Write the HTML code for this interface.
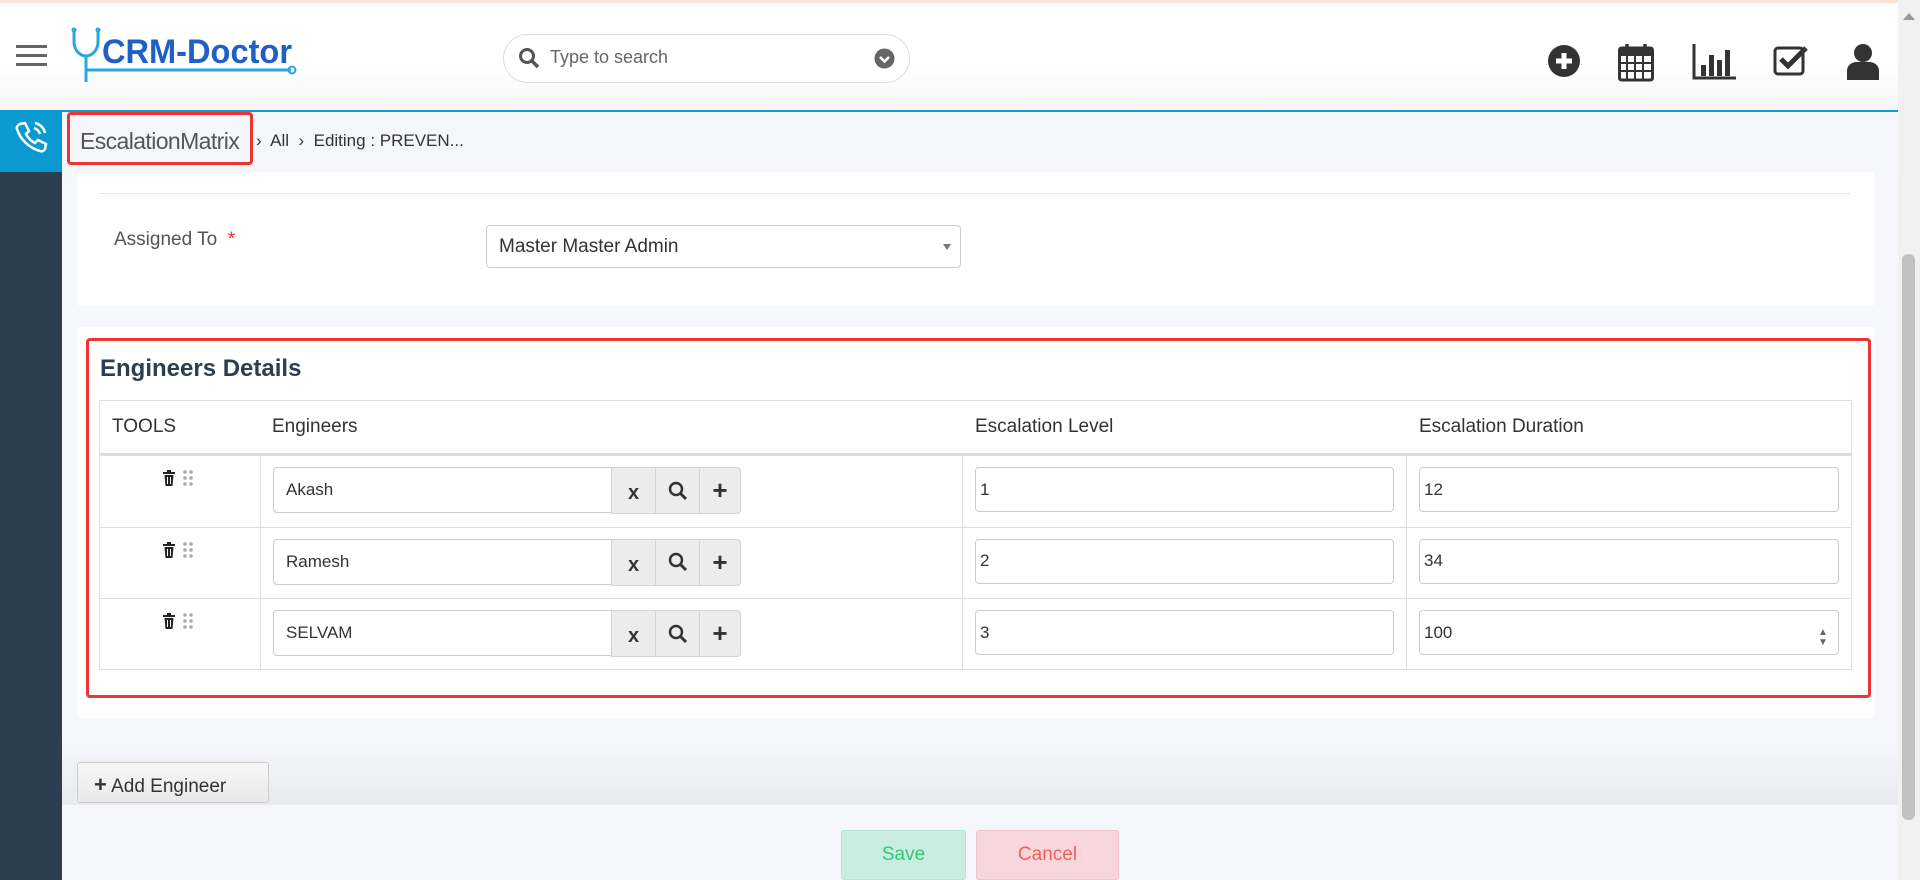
<!DOCTYPE html>
<html><head><meta charset="utf-8"><style>
*{box-sizing:border-box;margin:0;padding:0}
body{width:1920px;height:880px;overflow:hidden;font-family:"Liberation Sans",sans-serif;background:#f5f7fa;position:relative;color:#333}
.abs{position:absolute}
.top{left:0;top:0;width:1898px;height:110px;background:linear-gradient(#fff 60%,#f6f6f8);border-top:3px solid #fbe3dc}
.crumb{left:62px;top:110px;width:1836px;height:62px;background:#f4f6f9;border-top:2px solid #0aa0d0}
.side{left:0;top:110px;width:62px;height:770px;background:#2c3e50}
.phone{left:0;top:110px;width:62px;height:62px;background:#0a9ad0}
.card{background:#fff;border-radius:4px}
.inp{border:1px solid #ccc;border-radius:4px;background:#fff;font-size:17px;padding-left:12px;display:flex;align-items:center}
.th{font-size:19px;color:#333}
.btn{background:#ececec;border:1px solid #d4d4d4;display:flex;align-items:center;justify-content:center;font-size:20px;font-weight:bold;color:#333}
</style></head><body>
<div class="abs top"></div>
<div class="abs" style="left:16px;top:45px;width:31px;height:3px;background:#666;box-shadow:0 9px 0 #666,0 18px 0 #666"></div>
<svg class="abs" style="left:68px;top:26px" width="232" height="62" viewBox="0 0 232 62">
<path d="M6 4v12c0 8 6 14 12 14s12-6 12-14V4" fill="none" stroke="#2aa6e0" stroke-width="3"/>
<circle cx="6" cy="4" r="2.5" fill="#2aa6e0"/><circle cx="30" cy="4" r="2.5" fill="#2aa6e0"/>
<path d="M18 30v26M18 56V44h205" fill="none" stroke="#2aa6e0" stroke-width="3"/>
<circle cx="224" cy="44" r="3.5" fill="none" stroke="#2aa6e0" stroke-width="2"/>
<text x="34" y="37" font-family="Liberation Sans Narrow,Liberation Sans" font-weight="bold" font-size="34" fill="#1e5fc8" textLength="190" lengthAdjust="spacingAndGlyphs">CRM-Doctor</text>
</svg>
<div class="abs" style="left:503px;top:34px;width:407px;height:49px;border:1px solid #ddd;border-radius:25px;background:#fff"></div>
<svg class="abs" style="left:518px;top:47px" width="22" height="22" viewBox="0 0 22 22"><circle cx="9" cy="9" r="6.5" fill="none" stroke="#555" stroke-width="3"/><path d="M14 14l6 6" stroke="#555" stroke-width="3.5"/></svg>
<div class="abs" style="left:550px;top:47px;font-size:18px;color:#666">Type to search</div>
<svg class="abs" style="left:874px;top:48px" width="21" height="21"><circle cx="10.5" cy="10.5" r="10" fill="#666"/><path d="M6 9l4.5 4.5L15 9" fill="none" stroke="#fff" stroke-width="2.5"/></svg>
<svg class="abs" style="left:1547px;top:44px" width="34" height="34"><circle cx="17" cy="17" r="16" fill="#333"/><path d="M17 9v16M9 17h16" stroke="#fff" stroke-width="5"/></svg>
<svg class="abs" style="left:1618px;top:42px" width="36" height="40"><rect x="1.5" y="6" width="33" height="32" rx="2" fill="none" stroke="#333" stroke-width="3"/><rect x="1.5" y="6" width="33" height="8" fill="#333"/><path d="M9 2v8M27 2v8" stroke="#333" stroke-width="3.5"/><path d="M9 14v23M17 14v23M25 14v23M2 21h32M2 29h32" stroke="#333" stroke-width="2"/></svg>
<svg class="abs" style="left:1692px;top:44px" width="44" height="36"><path d="M2 0v34h42" fill="none" stroke="#333" stroke-width="3"/><rect x="9" y="21" width="5" height="11" fill="#333"/><rect x="17" y="11" width="5" height="21" fill="#333"/><rect x="25" y="16" width="5" height="16" fill="#333"/><rect x="33" y="6" width="5" height="26" fill="#333"/></svg>
<svg class="abs" style="left:1773px;top:44px" width="36" height="32"><rect x="2" y="4" width="28" height="26" rx="3" fill="none" stroke="#333" stroke-width="3"/><path d="M8 15l7 7L33 4" fill="none" stroke="#333" stroke-width="5"/></svg>
<svg class="abs" style="left:1847px;top:44px" width="32" height="36"><circle cx="16" cy="9" r="9" fill="#333"/><path d="M0 36v-9c0-6 5-9 10-9h12c5 0 10 3 10 9v9z" fill="#333"/></svg>
<div class="abs" style="left:1898px;top:0;width:22px;height:880px;background:#f1f1f1"></div>
<div class="abs" style="left:1902px;top:254px;width:13px;height:566px;background:#c1c1c1;border-radius:6px"></div>
<div class="abs" style="top:13px;border:6px solid transparent;border-bottom:7px solid #999;border-top:0;left:1903px"></div>
<div class="abs crumb"></div>
<div class="abs side"></div>
<div class="abs phone"></div>
<svg class="abs" style="left:14px;top:120px" width="34" height="34" viewBox="0 0 34 34"><path d="M6 4l5-1 4 8-3 3c2 4 5 7 9 9l3-3 8 4-1 5c-1 2-3 3-5 2C15 28 6 19 3 9 2 7 4 5 6 4z" fill="none" stroke="#fff" stroke-width="2.5"/><path d="M20 8c3 1 5 3 6 6M21 3c5 1 9 5 10 10" fill="none" stroke="#fff" stroke-width="2.5"/></svg>
<div class="abs" style="left:67px;top:112px;width:186px;height:53px;border:3px solid #e33;border-radius:4px"></div>
<div class="abs" style="left:80px;top:128px;font-size:23px;color:#555;letter-spacing:-0.6px">EscalationMatrix</div>
<div class="abs" style="left:256px;top:131px;font-size:17px;color:#333">›&nbsp; All &nbsp;›&nbsp; Editing : PREVEN...</div>
<div class="abs card" style="left:77px;top:172px;width:1798px;height:134px"></div>
<div class="abs" style="left:99px;top:193px;width:1752px;height:1px;background:#e5e5e5"></div>
<div class="abs" style="left:114px;top:229px;font-size:19px;color:#555">Assigned To <span style="color:#e33">&nbsp;*</span></div>
<div class="abs inp" style="left:486px;top:225px;width:475px;height:43px;font-size:19px">Master Master Admin</div>
<div class="abs" style="left:943px;top:244px;border:4px solid transparent;border-top:6px solid #777"></div>
<div class="abs card" style="left:77px;top:327px;width:1798px;height:391px"></div>
<div class="abs" style="left:86px;top:338px;width:1785px;height:360px;border:3px solid #e33;border-radius:4px"></div>
<div class="abs" style="left:100px;top:355px;font-size:24px;font-weight:bold;color:#2c3e50">Engineers Details</div>
<div class="abs" style="left:99px;top:400px;width:1753px;height:270px;border:1px solid #ddd"></div>
<div class="abs" style="left:99px;top:453px;width:1753px;height:3px;background:#ddd"></div>
<div class="abs" style="left:99px;top:527px;width:1753px;height:1px;background:#ddd"></div>
<div class="abs" style="left:99px;top:598px;width:1753px;height:1px;background:#ddd"></div>
<div class="abs" style="left:260px;top:456px;width:1px;height:214px;background:#ddd"></div>
<div class="abs" style="left:962px;top:456px;width:1px;height:214px;background:#ddd"></div>
<div class="abs" style="left:1406px;top:456px;width:1px;height:214px;background:#ddd"></div>
<div class="abs th" style="left:112px;top:416px">TOOLS</div>
<div class="abs th" style="left:272px;top:416px">Engineers</div>
<div class="abs th" style="left:975px;top:416px">Escalation Level</div>
<div class="abs th" style="left:1419px;top:416px">Escalation Duration</div>
<div id="rows"></div>
<script>
var names=["Akash","Ramesh","SELVAM"],lv=["1","2","3"],du=["12","34","100"],h="";
for(var i=0;i<3;i++){var y=467+i*71.5;
h+='<svg class="abs" style="left:163px;top:'+(y+3)+'px" width="34" height="22"><rect x="0" y="2" width="12" height="2" fill="#222"/><rect x="4" y="0" width="4" height="3" fill="#222"/><path d="M1.5 5h9l-1 11h-7z" fill="#222"/><path d="M4.5 7v7M7.5 7v7" stroke="#fff" stroke-width="1"/><g fill="#aaa"><circle cx="22" cy="2" r="1.8"/><circle cx="28" cy="2" r="1.8"/><circle cx="22" cy="8" r="1.8"/><circle cx="28" cy="8" r="1.8"/><circle cx="22" cy="14" r="1.8"/><circle cx="28" cy="14" r="1.8"/></g></svg>';
h+='<div class="abs inp" style="left:273px;top:'+y+'px;width:339px;height:46px;border-radius:4px 0 0 4px">'+names[i]+'</div>';
h+='<div class="abs btn" style="left:611px;top:'+y+'px;width:45px;height:47px;padding-top:6px">x</div>';
h+='<div class="abs btn" style="left:655px;top:'+y+'px;width:45px;height:47px"><svg width="20" height="20"><circle cx="8" cy="8" r="6" fill="none" stroke="#333" stroke-width="2.5"/><path d="M12 12l6 6" stroke="#333" stroke-width="3"/></svg></div>';
h+='<div class="abs btn" style="left:699px;top:'+y+'px;width:42px;height:47px;border-radius:0 4px 4px 0;font-size:26px">+</div>';
h+='<div class="abs inp" style="left:975px;top:'+y+'px;width:419px;height:45px;padding-left:4px">'+lv[i]+'</div>';
h+='<div class="abs inp" style="left:1419px;top:'+y+'px;width:420px;height:45px;padding-left:4px">'+du[i]+'</div>';}
h+='<div class="abs" style="left:1818px;top:628px;font-size:10px;color:#666;line-height:10px">▲<br>▼</div>';
document.getElementById("rows").innerHTML=h;
</script>
<div class="abs" style="left:62px;top:735px;width:1836px;height:70px;background:linear-gradient(#f5f7fa,#e9eaee)"></div>
<div class="abs" style="left:77px;top:762px;width:192px;height:41px;border:1px solid #ccc;border-radius:3px;background:linear-gradient(#f7f7f7,#e9e9e9);font-size:19px;color:#333;padding:9px 0 0 16px"><b style="font-size:22px">+</b> Add Engineer</div>
<div class="abs" style="left:841px;top:830px;width:125px;height:50px;background:#c9ede0;border:1px solid #b5e5d3;border-radius:3px;color:#2ecc71;font-size:19px;text-align:center;line-height:48px">Save</div>
<div class="abs" style="left:976px;top:830px;width:143px;height:50px;background:#f8d7dc;border:1px solid #f3c3ca;border-radius:3px;color:#f0605d;font-size:19px;text-align:center;line-height:48px">Cancel</div>
</body></html>
